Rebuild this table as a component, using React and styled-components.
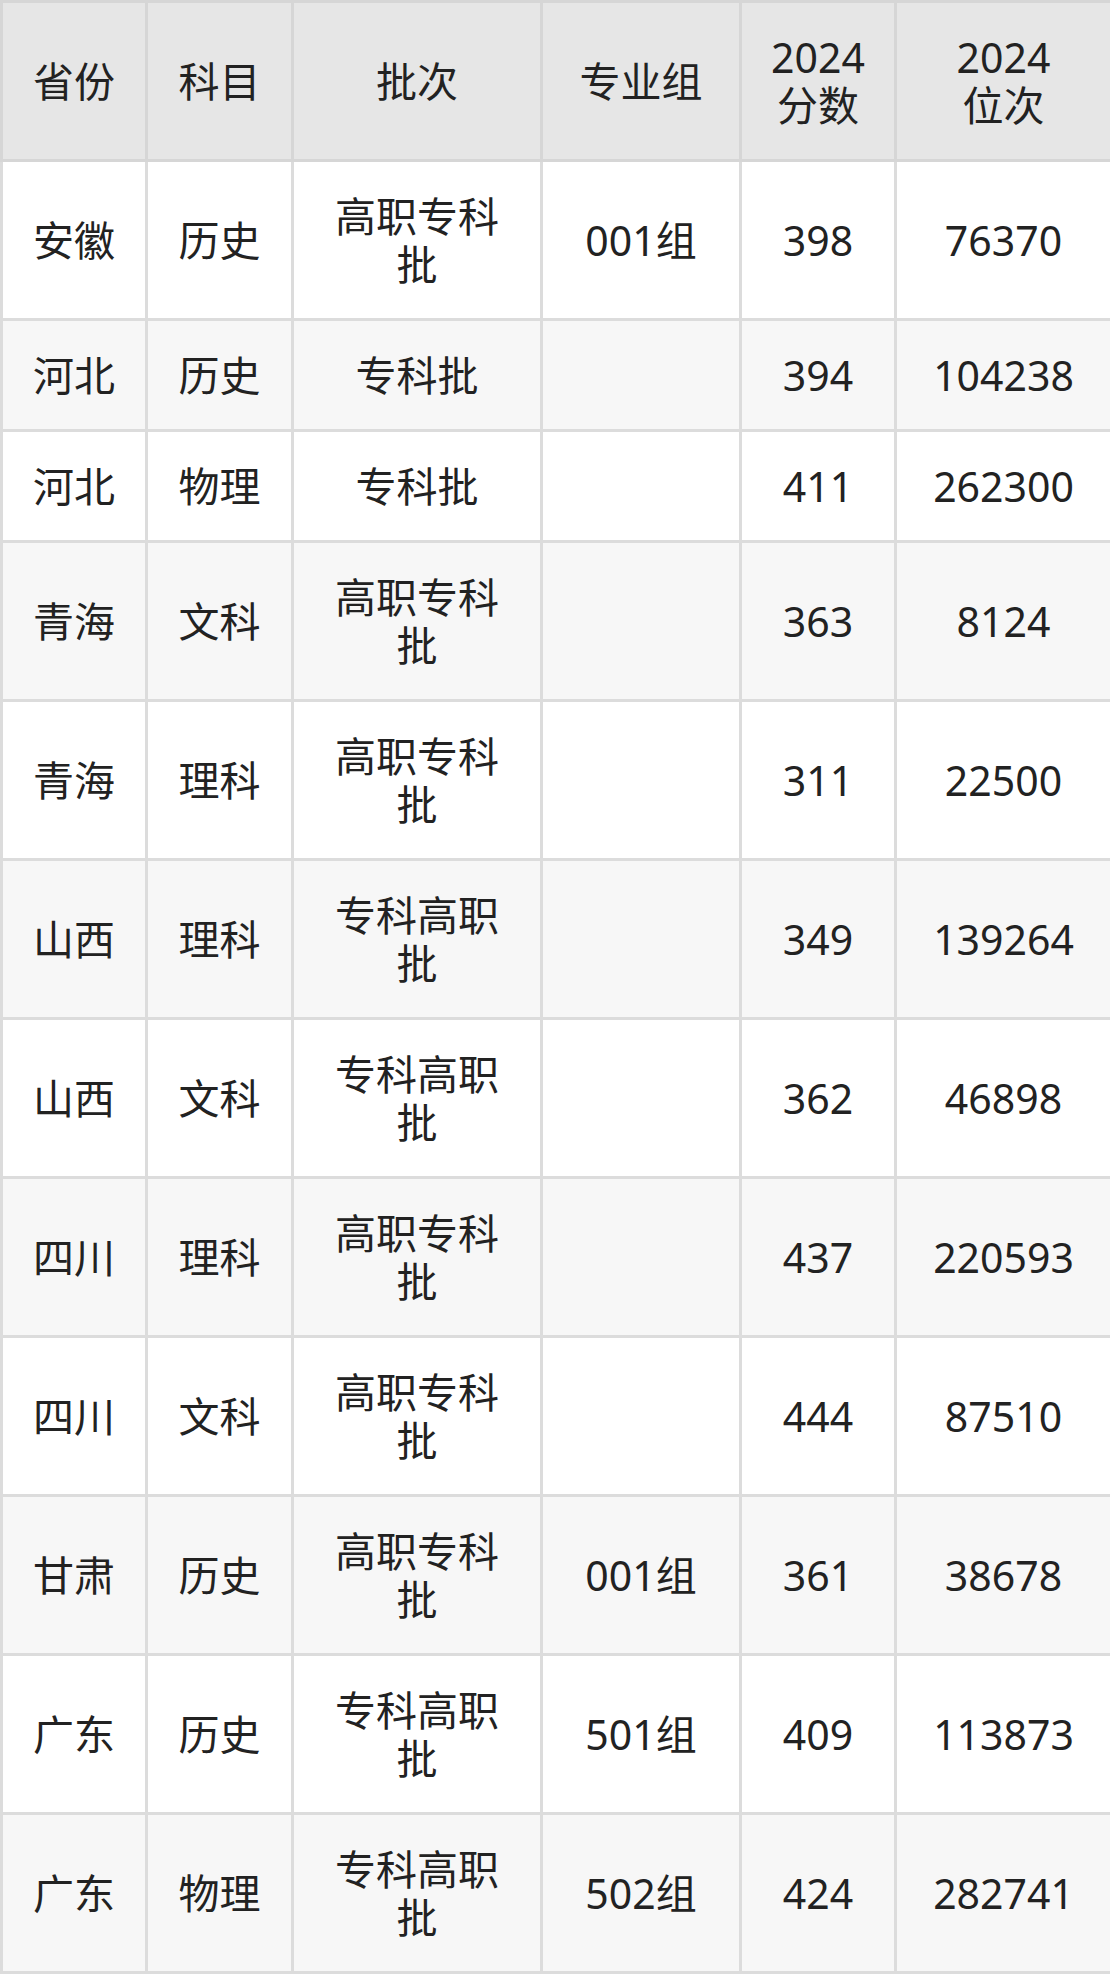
import React from 'react';
import styled, { createGlobalStyle } from 'styled-components';

const GlobalStyle = createGlobalStyle`
  body {
    margin: 0;
    background: #ffffff;
    font-family: "Noto Sans", "Noto Sans CJK SC", sans-serif;
  }
`;

const columns = [
  { key: 'province', label: '省份', width: 145 },
  { key: 'subject', label: '科目', width: 146 },
  { key: 'batch', label: '批次', width: 249 },
  { key: 'group', label: '专业组', width: 199 },
  { key: 'score', label: '2024\n分数', width: 155 },
  { key: 'rank', label: '2024\n位次', width: 216 },
];

const rows = [
  ['安徽', '历史', '高职专科批', '001组', '398', '76370'],
  ['河北', '历史', '专科批', '', '394', '104238'],
  ['河北', '物理', '专科批', '', '411', '262300'],
  ['青海', '文科', '高职专科批', '', '363', '8124'],
  ['青海', '理科', '高职专科批', '', '311', '22500'],
  ['山西', '理科', '专科高职批', '', '349', '139264'],
  ['山西', '文科', '专科高职批', '', '362', '46898'],
  ['四川', '理科', '高职专科批', '', '437', '220593'],
  ['四川', '文科', '高职专科批', '', '444', '87510'],
  ['甘肃', '历史', '高职专科批', '001组', '361', '38678'],
  ['广东', '历史', '专科高职批', '501组', '409', '113873'],
  ['广东', '物理', '专科高职批', '502组', '424', '282741'],
];

const App = () => {
  return (
    <>
      <GlobalStyle />
      <Table>
        <colgroup>
          {columns.map((c) => (
            <col key={c.key} style={{ width: c.width }} />
          ))}
        </colgroup>
        <thead>
          <tr>
            {columns.map((c) => (
              <HeadCell key={c.key}>{c.label}</HeadCell>
            ))}
          </tr>
        </thead>
        <tbody>
          {rows.map((row, i) => (
            <Row key={i} $striped={i % 2 === 1}>
              {row.map((value, j) => (
                <Cell key={j}>{value}</Cell>
              ))}
            </Row>
          ))}
        </tbody>
      </Table>
    </>
  );
};

const Table = styled.table`
  width: 1110px;
  table-layout: fixed;
  border-collapse: collapse;
  border: 3px solid #dcdcdc;
  color: #222222;
  font-size: 41px;
  line-height: 48px;
`;

const HeadCell = styled.th`
  background-color: #e6e6e6;
  border: 3px solid #d6d6d6;
  padding: 30px 20px;
  font-weight: 400;
  text-align: center;
  white-space: pre-line;
`;

const Row = styled.tr`
  background-color: ${({ $striped }) => ($striped ? '#f7f7f7' : '#ffffff')};
`;

const Cell = styled.td`
  border: 3px solid #dcdcdc;
  padding: 30px 22px;
  text-align: center;
  vertical-align: middle;
`;

export default App;
